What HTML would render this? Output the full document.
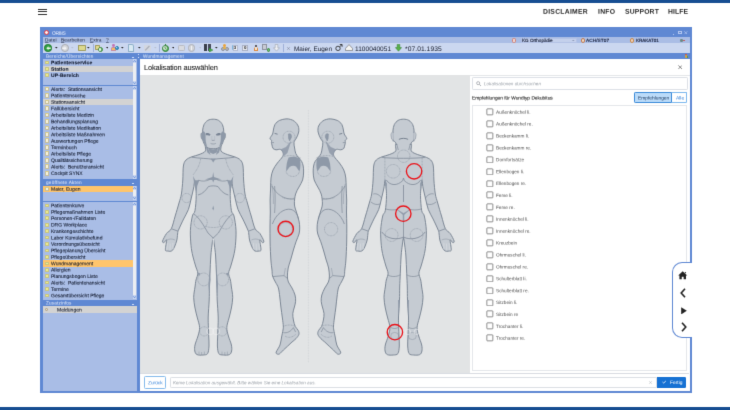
<!DOCTYPE html>
<html><head><meta charset="utf-8"><title>ORBIS</title><style>
*{box-sizing:border-box;margin:0;padding:0}
html,body{width:730px;height:410px;overflow:hidden;background:#fff}
body{position:relative;font-family:"Liberation Sans",sans-serif;color:#111}
.a{position:absolute}
.t{position:absolute;white-space:nowrap;line-height:1}
.t.w{-webkit-text-stroke:0.12px currentColor}
.li{position:absolute;left:43px;width:90px;height:6.45px}
.li .ic{position:absolute;left:1.7px;top:1.4px;width:4.1px;height:3.6px;border-radius:0.6px}
.li .tx{position:absolute;left:8.2px;top:0.5px;font-size:5px;line-height:5.6px;white-space:nowrap;color:#10182c}
.li.b .tx{font-weight:bold;letter-spacing:0.1px}
.yl{background:#edeb92;border:0.3px solid #c9c57e}
.doc{background:#f6f2dc;border:0.3px solid #c6bf9a;border-top:0.9px solid #d9cc84;height:4.8px !important;top:0.8px !important}
.cb{position:absolute;left:486.3px;width:6.6px;height:6.6px;border:0.42px solid #6a6a6a;border-radius:0.9px;background:#fff}
.cl{position:absolute;left:495.5px;font-size:4.7px;line-height:6px;color:#333;white-space:nowrap}
.sb{position:absolute;left:133px;width:3.4px;background:#eef1f8}
</style></head><body>
<svg width="0" height="0" style="position:absolute"><filter id="bl" x="0" y="0" width="100%" height="100%" color-interpolation-filters="sRGB"><feConvolveMatrix order="3" kernelMatrix="0 1 0 1 7 1 0 1 0" edgeMode="duplicate" preserveAlpha="true"/></filter></svg>
<div id="w" style="position:absolute;left:0;top:0;width:730px;height:410px;background:#fff;overflow:hidden;filter:url(#bl)">
<div class="a" style="left:0;top:0;width:730px;height:2.5px;background:#174e92"></div>
<div class="a" style="left:0;top:406.8px;width:730px;height:3.2px;background:#174e92"></div>
<div class="a" style="left:38px;top:9.0px;width:9px;height:1px;background:#333"></div>
<div class="a" style="left:38px;top:11.4px;width:9px;height:1px;background:#333"></div>
<div class="a" style="left:38px;top:13.8px;width:9px;height:1px;background:#333"></div>
<div class="t" style="left:542.8px;top:8px;font-size:6.8px;color:#2a2a2a;transform:translateY(0.70px) rotate(0.03deg);letter-spacing:0.27px;font-weight:bold;">DISCLAIMER</div>
<div class="t" style="left:597.5px;top:8px;font-size:6.8px;color:#2a2a2a;transform:translateY(0.70px) rotate(0.03deg);letter-spacing:0.27px;font-weight:bold;">INFO</div>
<div class="t" style="left:624.9px;top:8px;font-size:6.8px;color:#2a2a2a;transform:translateY(0.70px) rotate(0.03deg);letter-spacing:0.16px;font-weight:bold;">SUPPORT</div>
<div class="t" style="left:668.1px;top:8px;font-size:6.8px;color:#2a2a2a;transform:translateY(0.70px) rotate(0.03deg);letter-spacing:0.1px;font-weight:bold;">HILFE</div>
<div class="a" style="left:40.4px;top:26.5px;width:651.6px;height:366.5px;background:#5f88d3"></div>
<div class="a" style="left:44.1px;top:30.1px;width:5px;height:5px;border-radius:50%;border:1.2px solid #e23a42;background:#fdeeee"></div>
<div class="t" style="left:52.2px;top:31px;font-size:4.8px;color:#eef3ff;transform:translateY(0.70px) rotate(0.03deg);letter-spacing:-0.3px;">ORBIS</div>
<div class="a" style="left:672.5px;top:33.6px;width:1.6px;height:0.8px;background:#b4c8f0"></div>
<div class="a" style="left:678.4px;top:30.7px;width:3.6px;height:3.4px;border:0.7px solid #b4c8f0;border-top-width:1.2px"></div>
<svg class="a" style="left:684.3px;top:30.8px" width="3.6" height="3.6" viewBox="0 0 4 4"><path d="M0.3 0.3L3.7 3.7M3.7 0.3L0.3 3.7" stroke="#b4c8f0" stroke-width="0.8"/></svg>
<div class="a" style="left:42.6px;top:37px;width:647.1px;height:6.4px;background:#aabde5"></div>
<div class="t" style="left:45.3px;top:38px;font-size:4.8px;color:#1a2238;transform:translateY(0.60px) rotate(0.03deg);letter-spacing:0.08px;"><u>D</u>atei</div>
<div class="t" style="left:61.3px;top:38px;font-size:4.8px;color:#1a2238;transform:translateY(0.60px) rotate(0.03deg);letter-spacing:0.08px;"><u>B</u>earbeiten</div>
<div class="t" style="left:90.1px;top:38px;font-size:4.8px;color:#1a2238;transform:translateY(0.60px) rotate(0.03deg);letter-spacing:0.08px;"><u>E</u>xtra</div>
<div class="t" style="left:105.7px;top:38px;font-size:4.8px;color:#1a2238;transform:translateY(0.60px) rotate(0.03deg);letter-spacing:0.08px;"><u>?</u></div>
<div class="a" style="left:42.6px;top:43.4px;width:647.1px;height:9.2px;background:#cbd7f0"></div>
<div class="a" style="left:512px;top:37.8px;width:4.4px;height:5px;border-radius:1.6px;background:#f0d6d0;border:1px solid #cf8078"></div>
<div class="a" style="left:520.6px;top:37.6px;width:56.4px;height:5.4px;background:#c4d0ec;border:0.4px solid #b3c2e6"></div>
<div class="t" style="left:522px;top:39px;font-size:4.6px;color:#0e1630;transform:translateY(0.01px) rotate(0.03deg);-webkit-text-stroke:0.12px #0e1630;">KG Orthopädie</div>
<svg class="a" style="left:572.3px;top:39.6px" width="2.6" height="1.8" viewBox="0 0 4 3"><path d="M0 0H4L2 3Z" fill="#8e9ab8"/></svg>
<div class="a" style="left:581px;top:38px;width:4px;height:4.6px;border-radius:2px;border:0.8px solid #c07a55;background:#f1ddc4"></div>
<div class="t" style="left:586.1px;top:39px;font-size:4.7px;color:#0e1630;transform:translateY(0.01px) rotate(0.03deg);letter-spacing:0.1px;-webkit-text-stroke:0.12px #0e1630;">ACH/ST07</div>
<div class="a" style="left:630px;top:38px;width:4.4px;height:4.6px;border-radius:2px;border:0.8px solid #c98a4a;background:#efd2c0"></div>
<div class="t" style="left:636px;top:38px;font-size:4.5px;color:#0e1630;transform:translateY(0.90px) rotate(0.03deg);-webkit-text-stroke:0.12px #0e1630;">KRAKAT01</div>
<div class="a" style="left:680px;top:39px;width:3px;height:2.6px;border-radius:1.3px;background:#6b8a86"></div><div class="a" style="left:682.6px;top:39.8px;width:2px;height:1.4px;background:#c0504d;border-radius:0.7px"></div>
<div class="a" style="left:44.4px;top:44.3px;width:7.4px;height:7.4px;border-radius:50%;background:#33a043;border:0.7px solid #1f7a2d;"></div>
<svg class="a" style="left:45.5px;top:45.8px" width="5" height="4.4" viewBox="0 0 10 9"><path d="M0.5 4.5L5 0.5V3H9.5V6H5V8.5Z" fill="#e8f5e6"/></svg>
<svg class="a" style="left:55.0px;top:47.4px" width="2.6" height="1.6" viewBox="0 0 4 2.4"><path d="M0 0H4L2 2.4Z" fill="#222"/></svg>
<div class="a" style="left:60.9px;top:44.1px;width:7.8px;height:7.8px;border-radius:50%;background:#d4d6da;border:0.7px solid #a9acb3;"></div>
<svg class="a" style="left:62.4px;top:45.8px" width="5" height="4.4" viewBox="0 0 10 9"><path d="M9.5 4.5L5 0.5V3H0.5V6H5V8.5Z" fill="#f4f4f6"/></svg>
<svg class="a" style="left:71.0px;top:47.4px" width="2.6" height="1.6" viewBox="0 0 4 2.4"><path d="M0 0H4L2 2.4Z" fill="#b9c0d0"/></svg>
<div class="a" style="left:78.2px;top:45.4px;width:7.4px;height:5.4px;background:#dcd98f;border:0.6px solid #a19d60;border-radius:0.8px"></div><div class="a" style="left:78.2px;top:44.6px;width:3.4px;height:1.4px;background:#cfcb80;border:0.5px solid #a19d60;border-bottom:none"></div>
<svg class="a" style="left:87.4px;top:47.4px" width="2.6" height="1.6" viewBox="0 0 4 2.4"><path d="M0 0H4L2 2.4Z" fill="#222"/></svg>
<div class="a" style="left:92.6px;top:44.2px;width:0.6px;height:7.6px;background:#9fb0d8"></div>
<div class="a" style="left:94.6px;top:44.6px;width:5px;height:5px;background:#e0d890;border:0.6px solid #a39c5c;border-radius:0.8px"></div>
<div class="a" style="left:97.6px;top:46.8px;width:5.4px;height:5.4px;border-radius:50%;background:#6ab36a;border:0.6px solid #3c8a42;"></div>
<div class="a" style="left:99.2px;top:48.4px;width:2.2px;height:2.2px;border-radius:50%;background:#e8f3e6;"></div>
<svg class="a" style="left:105.5px;top:47.4px" width="2.6" height="1.6" viewBox="0 0 4 2.4"><path d="M0 0H4L2 2.4Z" fill="#222"/></svg>
<div class="a" style="left:112.39999999999999px;top:44.0px;width:2.8px;height:2.8px;border-radius:50%;background:#c276b4;"></div>
<div class="a" style="left:111.4px;top:46.6px;width:4.6px;height:4.6px;border-radius:1.6px 1.6px 0.6px 0.6px;background:#f3c062;border:0.4px solid #c98aa0"></div>
<div class="a" style="left:115.10000000000001px;top:46.3px;width:4.2px;height:4.2px;border-radius:50%;background:#3f9fce;border:0.4px solid #2f7fae;"></div>
<div class="a" style="left:116.1px;top:47.099999999999994px;width:1.4px;height:1.4px;border-radius:50%;background:#d8eef8;"></div>
<svg class="a" style="left:121.3px;top:47.4px" width="2.6" height="1.6" viewBox="0 0 4 2.4"><path d="M0 0H4L2 2.4Z" fill="#222"/></svg>
<div class="a" style="left:128.2px;top:44.3px;width:6px;height:7.4px;background:#d9eaf3;border:0.6px solid #8fb0c9;border-radius:0.6px 2.2px 0.6px 0.6px"></div>
<svg class="a" style="left:138.0px;top:47.4px" width="2.6" height="1.6" viewBox="0 0 4 2.4"><path d="M0 0H4L2 2.4Z" fill="#222"/></svg>
<div class="a" style="left:144.4px;top:44.8px;width:6.8px;height:6.4px;background:#d3d7e0;border-radius:1px"></div>
<svg class="a" style="left:144.4px;top:44.8px" width="6.8" height="6.4" viewBox="0 0 7 6.4"><path d="M1.2 5.4L5.6 1" stroke="#a9adb8" stroke-width="1.3"/></svg>
<svg class="a" style="left:154.0px;top:47.4px" width="2.6" height="1.6" viewBox="0 0 4 2.4"><path d="M0 0H4L2 2.4Z" fill="#b9c0d0"/></svg>
<div class="a" style="left:159.2px;top:44.2px;width:0.6px;height:7.6px;background:#9fb0d8"></div>
<div class="a" style="left:161.70000000000002px;top:44.699999999999996px;width:7.2px;height:7.2px;border-radius:50%;background:#62b567;border:0.7px solid #2f7d36;"></div>
<div class="a" style="left:163.10000000000002px;top:46.099999999999994px;width:4.4px;height:4.4px;border-radius:50%;background:#cfe8d0;"></div>
<svg class="a" style="left:163.3px;top:46.3px" width="4" height="4" viewBox="0 0 4 4"><path d="M2 0.6V2.1L3.1 2.8" fill="none" stroke="#2c5a30" stroke-width="0.6"/></svg>
<div class="a" style="left:164.5px;top:44px;width:1.6px;height:1.2px;background:#2f7d36"></div>
<svg class="a" style="left:171.89999999999998px;top:47.4px" width="2.6" height="1.6" viewBox="0 0 4 2.4"><path d="M0 0H4L2 2.4Z" fill="#222"/></svg>
<div class="a" style="left:177.6px;top:45px;width:7.6px;height:6.2px;background:#d9dbe0;border:0.6px solid #b9bcc4;border-radius:1.4px"></div>
<div class="a" style="left:187.79999999999998px;top:44.2px;width:7.6px;height:7.6px;border-radius:50%;background:#d2d4d9;border:0.7px solid #adb0b8;"></div>
<div class="a" style="left:191.1px;top:46.2px;width:1px;height:3.6px;background:#f2f2f4"></div>
<svg class="a" style="left:198.6px;top:47.4px" width="2.6" height="1.6" viewBox="0 0 4 2.4"><path d="M0 0H4L2 2.4Z" fill="#b9c0d0"/></svg>
<div class="a" style="left:204.3px;top:44.2px;width:3.1px;height:6.7px;background:#3a3f4c"></div><div class="a" style="left:207.6px;top:44.2px;width:3.1px;height:6.7px;background:#454b5a"></div>
<svg class="a" style="left:208.6px;top:47.6px" width="4" height="4.2" viewBox="0 0 4 4.2"><path d="M0 0L4 2.1L0 4.2Z" fill="#46a84a" stroke="#2a7a30" stroke-width="0.4"/></svg>
<svg class="a" style="left:215.0px;top:47.4px" width="2.6" height="1.6" viewBox="0 0 4 2.4"><path d="M0 0H4L2 2.4Z" fill="#222"/></svg>
<div class="a" style="left:223.0px;top:44.1px;width:3.0px;height:3.0px;border-radius:50%;background:#eba23a;"></div>
<div class="a" style="left:220.6px;top:47.2px;width:4px;height:4px;border-radius:50%;background:#b5b9c2;border:0.4px solid #8b8f99;"></div>
<div class="a" style="left:224.6px;top:47.2px;width:4px;height:4px;border-radius:50%;background:#b5b9c2;border:0.4px solid #8b8f99;"></div>
<div class="a" style="left:222.8px;top:46.8px;width:3.4px;height:2.2px;background:#e4b24c;border-radius:1px"></div>
<div class="a" style="left:231.6px;top:45.2px;width:2px;height:5px;border-radius:1px;background:#7fb6dc"></div>
<div class="a" style="left:232.6px;top:45.4px;width:5px;height:5.4px;background:#eef0f6;border:0.5px solid #b3bbd0"></div><div class="t" style="left:233.8px;top:46.1px;font-size:4.4px;font-weight:bold;color:#222">3</div>
<div class="a" style="left:242.4px;top:45.2px;width:5.4px;height:5.6px;background:#e6e8ee;border:0.5px solid #a9b0c4"></div><div class="t" style="left:243.9px;top:46.1px;font-size:4.4px;font-weight:bold;color:#222">0</div>
<div class="a" style="left:254.7px;top:44.5px;width:2.6px;height:2.6px;border-radius:50%;background:#3a3030;"></div>
<div class="a" style="left:253.8px;top:46.8px;width:4.4px;height:4.4px;border-radius:2px 2px 0.6px 0.6px;background:#e0873a"></div><div class="a" style="left:255.2px;top:47.2px;width:1.6px;height:2.6px;background:#f3e4d0"></div>
<div class="a" style="left:262.4px;top:44.2px;width:4.6px;height:6px;background:#c9ccd4;border:0.5px solid #8e939f"></div>
<div class="a" style="left:266.5px;top:48.1px;width:3.8px;height:3.8px;border-radius:50%;background:#6dbb6f;border:0.4px solid #378a3c;"></div>
<svg class="a" style="left:273.4px;top:44.2px" width="7" height="7.6" viewBox="0 0 7 7.6"><path d="M2.2 0.5H4.8V3.8H6.5L3.5 7.1L0.5 3.8H2.2Z" fill="#eceef2" stroke="#9da2ad" stroke-width="0.6"/></svg>
<div class="a" style="left:283.4px;top:44.2px;width:0.6px;height:7.6px;background:#9fb0d8"></div>
<svg class="a" style="left:286.9px;top:46.6px" width="3" height="3" viewBox="0 0 4 4"><path d="M0.4 0.4L3.6 3.6M3.6 0.4L0.4 3.6" stroke="#7a8196" stroke-width="0.9"/></svg>
<div class="t" style="left:294.4px;top:45px;font-size:6.4px;color:#161c2c;transform:translateY(0.91px) rotate(0.03deg);letter-spacing:0.03px;">Maier, Eugen</div>
<svg class="a" style="left:335px;top:44.4px" width="8" height="7.4" viewBox="0 0 8 7.4"><circle cx="3" cy="4.4" r="2.2" fill="none" stroke="#222" stroke-width="0.8"/><path d="M4.6 2.8L7 0.6M4.8 0.5H7.1V2.8" fill="none" stroke="#222" stroke-width="0.8"/></svg>
<svg class="a" style="left:344.6px;top:44.4px" width="8" height="7" viewBox="0 0 8 7"><path d="M0.5 4.4L4 0.6L7.5 4.4V6.5H0.5Z" fill="#f4f4f2" stroke="#666" stroke-width="0.6"/></svg>
<div class="t" style="left:354.7px;top:45px;font-size:6.5px;color:#161c2c;transform:translateY(0.91px) rotate(0.03deg);letter-spacing:0.04px;">1100040051</div>
<svg class="a" style="left:394.6px;top:44px" width="7" height="7.6" viewBox="0 0 7 7.6"><path d="M2.2 0.4H4.8V3.6H6.6L3.5 7.2L0.4 3.6H2.2Z" fill="#58b04a" stroke="#2f7d2c" stroke-width="0.5"/></svg>
<div class="t" style="left:405.3px;top:45px;font-size:6.7px;color:#161c2c;transform:translateY(0.92px) rotate(0.03deg);letter-spacing:0.06px;">*07.01.1935</div>
<div class="t" style="left:45.9px;top:54px;font-size:4.7px;color:#e4ecfb;transform:translateY(0.71px) rotate(0.03deg);letter-spacing:0.14px;">Bereiche/Übersichten</div>
<div class="a" style="left:132.4px;top:56.6px;width:1.4px;height:0.7px;background:#cfdcf8"></div>
<div class="a" style="left:138.2px;top:54.2px;width:0.9px;height:4px;border-top:1px solid #d6e1f8;border-bottom:1px solid #d6e1f8;"></div>
<div class="t" style="left:143px;top:54px;font-size:4.7px;color:#e4ecfb;transform:translateY(0.71px) rotate(0.03deg);letter-spacing:0.1px;">Wundmanagement</div>
<div class="a" style="left:685.4px;top:53.5px;width:1.8px;height:1.8px;border-radius:50%;background:#d9503a;"></div>
<div class="a" style="left:685.3px;top:55.4px;width:2.2px;height:2.6px;background:#d8a23a;border-radius:0.8px"></div>
<div class="a" style="left:686.8000000000001px;top:56.400000000000006px;width:1.6px;height:1.6px;border-radius:50%;background:#4d9a3a;"></div>
<div class="a" style="left:42.8px;top:59px;width:94.4px;height:331.6px;background:#a9bde6"></div>
<div class="li b" style="top:59.20px;width:89.8px;"><span class="ic yl"></span></div>
<div class="t" style="left:51.2px;top:60px;font-size:5.0px;color:#0c1326;transform:translateY(0.20px) rotate(0.03deg);letter-spacing:0.1px;font-weight:bold;-webkit-text-stroke:0.06px #0c1326;">Patientenservice</div>
<div class="li b" style="top:65.70px;width:89.8px;background:#d3d3d3;"><span class="ic yl"></span></div>
<div class="t" style="left:51.2px;top:66px;font-size:5.0px;color:#0c1326;transform:translateY(0.70px) rotate(0.03deg);letter-spacing:0.1px;font-weight:bold;-webkit-text-stroke:0.06px #0c1326;">Station</div>
<div class="li b" style="top:72.10px;width:89.8px;"><span class="ic yl"></span></div>
<div class="t" style="left:51.2px;top:73px;font-size:5.0px;color:#0c1326;transform:translateY(0.10px) rotate(0.03deg);letter-spacing:0.1px;font-weight:bold;-webkit-text-stroke:0.06px #0c1326;">UP-Bereich</div>
<div class="a" style="left:42.8px;top:84.9px;width:94.4px;height:0.9px;background:#5f88d3"></div>
<div class="li " style="top:85.90px;width:89.8px;"><span class="ic doc"></span></div>
<div class="t" style="left:51.2px;top:86px;font-size:5.0px;color:#0c1326;transform:translateY(0.90px) rotate(0.03deg);-webkit-text-stroke:0.06px #0c1326;">Alerts:&nbsp; Stationsansicht</div>
<div class="li " style="top:92.37px;width:89.8px;"><span class="ic doc"></span></div>
<div class="t" style="left:51.2px;top:93px;font-size:5.0px;color:#0c1326;transform:translateY(0.37px) rotate(0.03deg);-webkit-text-stroke:0.06px #0c1326;">Patientensuche</div>
<div class="li " style="top:98.84px;width:89.8px;background:#d3d3d3;"><span class="ic doc"></span></div>
<div class="t" style="left:51.2px;top:99px;font-size:5.0px;color:#0c1326;transform:translateY(0.84px) rotate(0.03deg);-webkit-text-stroke:0.06px #0c1326;">Stationsansicht</div>
<div class="li " style="top:105.31px;width:89.8px;"><span class="ic doc"></span></div>
<div class="t" style="left:51.2px;top:106px;font-size:5.0px;color:#0c1326;transform:translateY(0.31px) rotate(0.03deg);-webkit-text-stroke:0.06px #0c1326;">Fallübersicht</div>
<div class="li " style="top:111.78px;width:89.8px;"><span class="ic doc"></span></div>
<div class="t" style="left:51.2px;top:112px;font-size:5.0px;color:#0c1326;transform:translateY(0.78px) rotate(0.03deg);-webkit-text-stroke:0.06px #0c1326;">Arbeitsliste Medizin</div>
<div class="li " style="top:118.25px;width:89.8px;"><span class="ic doc"></span></div>
<div class="t" style="left:51.2px;top:119px;font-size:5.0px;color:#0c1326;transform:translateY(0.25px) rotate(0.03deg);-webkit-text-stroke:0.06px #0c1326;">Behandlungsplanung</div>
<div class="li " style="top:124.72px;width:89.8px;"><span class="ic doc"></span></div>
<div class="t" style="left:51.2px;top:125px;font-size:5.0px;color:#0c1326;transform:translateY(0.72px) rotate(0.03deg);-webkit-text-stroke:0.06px #0c1326;">Arbeitsliste Medikation</div>
<div class="li " style="top:131.19px;width:89.8px;"><span class="ic doc"></span></div>
<div class="t" style="left:51.2px;top:132px;font-size:5.0px;color:#0c1326;transform:translateY(0.19px) rotate(0.03deg);-webkit-text-stroke:0.06px #0c1326;">Arbeitsliste Maßnahmen</div>
<div class="li " style="top:137.66px;width:89.8px;"><span class="ic doc"></span></div>
<div class="t" style="left:51.2px;top:138px;font-size:5.0px;color:#0c1326;transform:translateY(0.66px) rotate(0.03deg);-webkit-text-stroke:0.06px #0c1326;">Auswertungen Pflege</div>
<div class="li " style="top:144.13px;width:89.8px;"><span class="ic doc"></span></div>
<div class="t" style="left:51.2px;top:145px;font-size:5.0px;color:#0c1326;transform:translateY(0.13px) rotate(0.03deg);-webkit-text-stroke:0.06px #0c1326;">Terminbuch</div>
<div class="li " style="top:150.60px;width:89.8px;"><span class="ic doc"></span></div>
<div class="t" style="left:51.2px;top:151px;font-size:5.0px;color:#0c1326;transform:translateY(0.60px) rotate(0.03deg);-webkit-text-stroke:0.06px #0c1326;">Arbeitsliste Pflege</div>
<div class="li " style="top:157.07px;width:89.8px;"><span class="ic doc"></span></div>
<div class="t" style="left:51.2px;top:158px;font-size:5.0px;color:#0c1326;transform:translateY(0.07px) rotate(0.03deg);-webkit-text-stroke:0.06px #0c1326;">Qualitätssicherung</div>
<div class="li " style="top:163.54px;width:89.8px;"><span class="ic doc"></span></div>
<div class="t" style="left:51.2px;top:164px;font-size:5.0px;color:#0c1326;transform:translateY(0.54px) rotate(0.03deg);-webkit-text-stroke:0.06px #0c1326;">Alerts:&nbsp; Benutzeransicht</div>
<div class="li " style="top:170.01px;width:89.8px;"><span class="ic doc"></span></div>
<div class="t" style="left:51.2px;top:171px;font-size:5.0px;color:#0c1326;transform:translateY(0.01px) rotate(0.03deg);-webkit-text-stroke:0.06px #0c1326;">Cockpit SYNX</div>
<div class="a" style="left:42.8px;top:179.4px;width:94.4px;height:6.3px;background:#5f88d3"></div>
<div class="t" style="left:45.9px;top:181px;font-size:4.7px;color:#e4ecfb;transform:translateY(0.01px) rotate(0.03deg);letter-spacing:0.22px;">geöffnete Akten</div>
<div class="a" style="left:132.4px;top:183.2px;width:1.4px;height:0.7px;background:#cfdcf8"></div>
<div class="li " style="top:185.80px;width:89.8px;background:#ffc56c;"><span class="ic doc"></span></div>
<div class="t" style="left:51.2px;top:186px;font-size:5.0px;color:#0c1326;transform:translateY(0.80px) rotate(0.03deg);-webkit-text-stroke:0.06px #0c1326;">Maier, Eugen</div>
<div class="a" style="left:42.8px;top:200.6px;width:94.4px;height:0.9px;background:#5f88d3"></div>
<div class="li " style="top:202.20px;width:89.8px;"><span class="ic yl"></span></div>
<div class="t" style="left:51.2px;top:203px;font-size:5.0px;color:#0c1326;transform:translateY(0.20px) rotate(0.03deg);-webkit-text-stroke:0.06px #0c1326;">Patientenkurve</div>
<div class="li " style="top:208.64px;width:89.8px;"><span class="ic yl"></span></div>
<div class="t" style="left:51.2px;top:209px;font-size:5.0px;color:#0c1326;transform:translateY(0.64px) rotate(0.03deg);-webkit-text-stroke:0.06px #0c1326;">Pflegemaßnahmen Liste</div>
<div class="li " style="top:215.08px;width:89.8px;"><span class="ic yl"></span></div>
<div class="t" style="left:51.2px;top:216px;font-size:5.0px;color:#0c1326;transform:translateY(0.08px) rotate(0.03deg);-webkit-text-stroke:0.06px #0c1326;">Personen-/Falldaten</div>
<div class="li " style="top:221.52px;width:89.8px;"><span class="ic yl"></span></div>
<div class="t" style="left:51.2px;top:222px;font-size:5.0px;color:#0c1326;transform:translateY(0.52px) rotate(0.03deg);-webkit-text-stroke:0.06px #0c1326;">DRG Workplace</div>
<div class="li " style="top:227.96px;width:89.8px;"><span class="ic yl"></span></div>
<div class="t" style="left:51.2px;top:228px;font-size:5.0px;color:#0c1326;transform:translateY(0.96px) rotate(0.03deg);-webkit-text-stroke:0.06px #0c1326;">Krankengeschichte</div>
<div class="li " style="top:234.40px;width:89.8px;"><span class="ic yl"></span></div>
<div class="t" style="left:51.2px;top:235px;font-size:5.0px;color:#0c1326;transform:translateY(0.40px) rotate(0.03deg);-webkit-text-stroke:0.06px #0c1326;">Labor Kumulativbefund</div>
<div class="li " style="top:240.84px;width:89.8px;"><span class="ic yl"></span></div>
<div class="t" style="left:51.2px;top:241px;font-size:5.0px;color:#0c1326;transform:translateY(0.84px) rotate(0.03deg);-webkit-text-stroke:0.06px #0c1326;">Verordnungsübersicht</div>
<div class="li " style="top:247.28px;width:89.8px;"><span class="ic yl"></span></div>
<div class="t" style="left:51.2px;top:248px;font-size:5.0px;color:#0c1326;transform:translateY(0.28px) rotate(0.03deg);-webkit-text-stroke:0.06px #0c1326;">Pflegeplanung Übersicht</div>
<div class="li " style="top:253.72px;width:89.8px;"><span class="ic yl"></span></div>
<div class="t" style="left:51.2px;top:254px;font-size:5.0px;color:#0c1326;transform:translateY(0.72px) rotate(0.03deg);-webkit-text-stroke:0.06px #0c1326;">Pflegeübersicht</div>
<div class="li " style="top:260.16px;width:89.8px;background:#ffc56c;"><span class="ic yl"></span></div>
<div class="t" style="left:51.2px;top:261px;font-size:5.0px;color:#0c1326;transform:translateY(0.16px) rotate(0.03deg);-webkit-text-stroke:0.06px #0c1326;">Wundmanagement</div>
<div class="li " style="top:266.60px;width:89.8px;"><span class="ic yl"></span></div>
<div class="t" style="left:51.2px;top:267px;font-size:5.0px;color:#0c1326;transform:translateY(0.60px) rotate(0.03deg);-webkit-text-stroke:0.06px #0c1326;">Allergien</div>
<div class="li " style="top:273.04px;width:89.8px;"><span class="ic yl"></span></div>
<div class="t" style="left:51.2px;top:274px;font-size:5.0px;color:#0c1326;transform:translateY(0.04px) rotate(0.03deg);-webkit-text-stroke:0.06px #0c1326;">Planungsbogen Liste</div>
<div class="li " style="top:279.48px;width:89.8px;"><span class="ic yl"></span></div>
<div class="t" style="left:51.2px;top:280px;font-size:5.0px;color:#0c1326;transform:translateY(0.48px) rotate(0.03deg);-webkit-text-stroke:0.06px #0c1326;">Alerts:&nbsp; Patientenansicht</div>
<div class="li " style="top:285.92px;width:89.8px;"><span class="ic yl"></span></div>
<div class="t" style="left:51.2px;top:286px;font-size:5.0px;color:#0c1326;transform:translateY(0.92px) rotate(0.03deg);-webkit-text-stroke:0.06px #0c1326;">Termine</div>
<div class="li " style="top:292.36px;width:89.8px;"><span class="ic yl"></span></div>
<div class="t" style="left:51.2px;top:293px;font-size:5.0px;color:#0c1326;transform:translateY(0.36px) rotate(0.03deg);-webkit-text-stroke:0.06px #0c1326;">Gesamtübersicht Pflege</div>
<div class="a" style="left:42.8px;top:299.6px;width:94.4px;height:6.5px;background:#5f88d3"></div>
<div class="t" style="left:45.9px;top:301px;font-size:4.7px;color:#e4ecfb;transform:translateY(0.51px) rotate(0.03deg);letter-spacing:0.15px;">Zusatzinfos</div>
<div class="a" style="left:132.4px;top:303.6px;width:1.4px;height:0.7px;background:#cfdcf8"></div>
<div class="a" style="left:42.8px;top:306.4px;width:94.4px;height:6.6px;background:#d3d3d3"></div>
<div class="a" style="left:45.1px;top:308.3px;width:3.0px;height:3.0px;border-radius:50%;background:#e9e4d8;border:0.4px solid #a89a7a;"></div>
<div class="t" style="left:57.3px;top:307px;font-size:5.0px;color:#0c1326;transform:translateY(0.50px) rotate(0.03deg);-webkit-text-stroke:0.06px #0c1326;">Meldungen</div>
<div class="sb" style="top:59.2px;height:25.599999999999994px;background:#c9d6f0"></div>
<div class="sb" style="top:63.400000000000006px;height:17.199999999999996px;background:#eceef2"></div>
<svg class="a" style="left:133.2px;top:60.400000000000006px" width="3.2" height="2.2" viewBox="0 0 4 3"><path d="M0.3 2.6L2 0.6L3.7 2.6" fill="none" stroke="#3f6fcc" stroke-width="0.9"/></svg>
<svg class="a" style="left:133.2px;top:81.6px" width="3.2" height="2.2" viewBox="0 0 4 3"><path d="M0.3 0.4L2 2.4L3.7 0.4" fill="none" stroke="#3f6fcc" stroke-width="0.9"/></svg>
<div class="sb" style="top:86px;height:93.19999999999999px;background:#c9d6f0"></div>
<div class="sb" style="top:90.2px;height:84.79999999999998px;background:#eceef2"></div>
<svg class="a" style="left:133.2px;top:87.2px" width="3.2" height="2.2" viewBox="0 0 4 3"><path d="M0.3 2.6L2 0.6L3.7 2.6" fill="none" stroke="#3f6fcc" stroke-width="0.9"/></svg>
<svg class="a" style="left:133.2px;top:176.0px" width="3.2" height="2.2" viewBox="0 0 4 3"><path d="M0.3 0.4L2 2.4L3.7 0.4" fill="none" stroke="#3f6fcc" stroke-width="0.9"/></svg>
<div class="sb" style="top:185.9px;height:14.5px;background:#c9d6f0"></div>
<div class="sb" style="top:190.1px;height:6.1px;background:#eceef2"></div>
<svg class="a" style="left:133.2px;top:187.1px" width="3.2" height="2.2" viewBox="0 0 4 3"><path d="M0.3 2.6L2 0.6L3.7 2.6" fill="none" stroke="#3f6fcc" stroke-width="0.9"/></svg>
<svg class="a" style="left:133.2px;top:197.20000000000002px" width="3.2" height="2.2" viewBox="0 0 4 3"><path d="M0.3 0.4L2 2.4L3.7 0.4" fill="none" stroke="#3f6fcc" stroke-width="0.9"/></svg>
<div class="sb" style="top:201.6px;height:97.79999999999998px;background:#c9d6f0"></div>
<div class="sb" style="top:205.79999999999998px;height:89.39999999999998px;background:#eceef2"></div>
<svg class="a" style="left:133.2px;top:202.79999999999998px" width="3.2" height="2.2" viewBox="0 0 4 3"><path d="M0.3 2.6L2 0.6L3.7 2.6" fill="none" stroke="#3f6fcc" stroke-width="0.9"/></svg>
<svg class="a" style="left:133.2px;top:296.2px" width="3.2" height="2.2" viewBox="0 0 4 3"><path d="M0.3 0.4L2 2.4L3.7 0.4" fill="none" stroke="#3f6fcc" stroke-width="0.9"/></svg>
<div class="a" style="left:140px;top:59px;width:549.7px;height:332.2px;background:#fff"></div>
<div class="t" style="left:144.1px;top:64px;font-size:7.4px;color:#1c1c1c;transform:translateY(0.10px) rotate(0.03deg);letter-spacing:-0.12px;-webkit-text-stroke:0.08px #1c1c1c;">Lokalisation auswählen</div>
<svg class="a" style="left:677.8px;top:65.2px" width="4.4" height="4.4" viewBox="0 0 5 5"><path d="M0.4 0.4L4.6 4.6M4.6 0.4L0.4 4.6" stroke="#444" stroke-width="0.7"/></svg>
<div class="a" style="left:140px;top:75.2px;width:330px;height:298px;background:#e2e4e5"></div>
<div class="a" style="left:470px;top:74.8px;width:219.6px;height:0.6px;background:#e4e6e9"></div>
<svg class="a" style="left:0;top:0" width="730" height="410" viewBox="0 0 730 410">
<g fill="#c5cbd2" stroke="#7c8795" stroke-width="1.0" stroke-linejoin="round">
<path d="M206.2 143.0C203.7 144.3 206.6 149.1 205.4 151.0C204.2 152.9 201.3 153.6 199.0 154.6C196.7 155.6 194.0 155.9 191.8 156.8C189.6 157.7 187.4 158.5 186.0 160.0C184.6 161.5 183.9 162.7 183.4 166.0C182.9 169.3 183.1 175.3 182.8 180.0C182.5 184.7 182.0 190.2 181.4 194.0C180.8 197.8 180.0 199.3 179.0 203.0C178.0 206.7 176.5 211.7 175.2 216.0C173.9 220.3 172.8 225.8 171.3 228.7C169.9 231.6 167.9 231.4 166.5 233.5C165.1 235.6 163.0 239.5 162.6 241.0C162.2 242.5 163.3 242.8 164.0 242.6C164.7 242.4 166.4 238.8 166.6 240.0C166.8 241.2 165.3 247.8 165.4 249.6C165.5 251.4 166.2 250.9 167.4 251.0C168.6 251.1 171.1 251.9 172.6 250.2C174.1 248.5 175.8 243.7 176.6 241.0C177.4 238.3 177.3 235.8 177.6 234.0C177.9 232.2 177.4 232.8 178.4 230.3C179.4 227.8 181.9 222.5 183.6 219.0C185.3 215.5 187.1 212.9 188.4 209.5C189.7 206.1 190.3 202.0 191.2 198.4C192.1 194.8 193.0 191.0 193.6 188.0C194.2 185.0 194.5 179.3 194.9 180.5C195.3 181.7 196.2 190.4 196.2 195.4C196.2 200.4 195.6 207.2 195.0 210.6C194.4 214.0 193.2 212.7 192.4 216.0C191.6 219.3 190.6 225.4 190.4 230.3C190.2 235.2 190.6 241.1 191.0 245.4C191.4 249.7 192.0 252.6 192.8 256.0C193.6 259.4 194.8 263.1 195.6 266.0C196.4 268.9 197.7 270.9 197.8 273.2C197.9 275.5 196.5 277.7 196.0 280.0C195.5 282.3 195.4 284.1 195.0 287.0C194.6 289.9 193.7 293.9 193.7 297.4C193.7 300.9 194.4 304.6 195.0 308.0C195.6 311.4 196.6 314.8 197.4 318.0C198.2 321.2 199.5 324.5 199.6 327.5C199.7 330.5 198.8 333.1 198.0 336.0C197.2 338.9 195.5 342.5 195.0 345.0C194.5 347.5 194.5 349.4 194.8 351.0C195.1 352.6 195.6 353.9 197.0 354.6C198.4 355.3 201.2 355.2 203.0 355.0C204.8 354.8 206.6 355.1 207.6 353.6C208.6 352.1 208.8 348.9 209.0 346.0C209.2 343.1 208.8 339.1 208.7 336.0C208.6 332.9 208.5 330.7 208.4 327.5C208.3 324.3 208.1 321.6 208.2 317.0C208.3 312.4 209.0 305.0 209.2 300.0C209.4 295.0 209.3 291.5 209.4 287.0C209.5 282.5 209.8 278.4 210.0 273.2C210.2 268.0 210.5 260.7 210.8 256.0C211.1 251.3 211.7 247.9 212.0 245.0C212.3 242.1 212.7 239.7 212.9 238.6C213.2 237.5 213.2 237.5 213.5 238.6C213.7 239.7 214.0 242.1 214.4 245.0C214.7 247.9 215.3 251.3 215.6 256.0C215.9 260.7 216.2 268.0 216.4 273.2C216.6 278.4 216.9 282.5 217.0 287.0C217.1 291.5 217.0 295.0 217.2 300.0C217.4 305.0 218.1 312.4 218.2 317.0C218.3 321.6 218.1 324.3 218.0 327.5C217.9 330.7 217.8 332.9 217.7 336.0C217.6 339.1 217.2 343.1 217.4 346.0C217.6 348.9 217.8 352.1 218.8 353.6C219.8 355.1 221.6 354.8 223.4 355.0C225.2 355.2 228.0 355.3 229.4 354.6C230.8 353.9 231.3 352.6 231.6 351.0C231.9 349.4 231.9 347.5 231.4 345.0C230.9 342.5 229.2 338.9 228.4 336.0C227.6 333.1 226.7 330.5 226.8 327.5C226.9 324.5 228.2 321.2 229.0 318.0C229.8 314.8 230.8 311.4 231.4 308.0C232.0 304.6 232.7 300.9 232.7 297.4C232.7 293.9 231.8 289.9 231.4 287.0C231.0 284.1 230.9 282.3 230.4 280.0C229.9 277.7 228.5 275.5 228.6 273.2C228.7 270.9 230.0 268.9 230.8 266.0C231.6 263.1 232.8 259.4 233.6 256.0C234.4 252.6 235.0 249.7 235.4 245.4C235.8 241.1 236.2 235.2 236.0 230.3C235.8 225.4 234.8 219.3 234.0 216.0C233.2 212.7 232.0 214.0 231.4 210.6C230.8 207.2 230.2 200.4 230.2 195.4C230.2 190.4 231.1 181.7 231.5 180.5C231.9 179.3 232.2 185.0 232.8 188.0C233.4 191.0 234.3 194.8 235.2 198.4C236.1 202.0 236.7 206.1 238.0 209.5C239.3 212.9 241.1 215.5 242.8 219.0C244.5 222.5 247.0 227.8 248.0 230.3C249.0 232.8 248.5 232.2 248.8 234.0C249.1 235.8 249.0 238.3 249.8 241.0C250.6 243.7 252.3 248.5 253.8 250.2C255.3 251.9 257.8 251.1 259.0 251.0C260.2 250.9 260.9 251.4 261.0 249.6C261.1 247.8 259.6 241.2 259.8 240.0C260.0 238.8 261.7 242.4 262.4 242.6C263.1 242.8 264.2 242.5 263.8 241.0C263.4 239.5 261.3 235.6 259.9 233.5C258.4 231.4 256.5 231.6 255.1 228.7C253.6 225.8 252.5 220.3 251.2 216.0C249.9 211.7 248.4 206.7 247.4 203.0C246.4 199.3 245.6 197.8 245.0 194.0C244.4 190.2 243.9 184.7 243.6 180.0C243.3 175.3 243.5 169.3 243.0 166.0C242.5 162.7 241.8 161.5 240.4 160.0C239.0 158.5 236.8 157.7 234.6 156.8C232.4 155.9 229.7 155.6 227.4 154.6C225.1 153.6 222.2 152.9 221.0 151.0C219.8 149.1 222.7 144.3 220.2 143.0C217.7 141.7 208.7 141.7 206.2 143.0Z"/>
<path d="M213.2 119.2C211.4 119.2 209.3 119.5 207.8 120.4C206.3 121.3 204.8 123.0 204.0 124.6C203.2 126.2 202.9 128.6 202.7 130.0C202.5 131.4 202.8 132.4 202.6 133.0C202.3 133.6 201.4 132.8 201.2 133.6C201.0 134.3 201.0 136.4 201.3 137.5C201.6 138.6 202.4 139.3 202.8 140.2C203.2 141.1 203.3 142.0 203.8 143.0C204.3 144.0 204.8 145.1 205.6 146.0C206.4 146.9 207.3 147.7 208.6 148.2C209.9 148.7 211.7 148.8 213.2 148.8C214.7 148.8 216.5 148.7 217.8 148.2C219.1 147.7 220.0 146.9 220.8 146.0C221.6 145.1 222.1 144.0 222.6 143.0C223.1 142.0 223.2 141.1 223.6 140.2C224.0 139.3 224.8 138.6 225.1 137.5C225.4 136.4 225.4 134.3 225.2 133.6C225.0 132.8 224.0 133.6 223.8 133.0C223.5 132.4 223.9 131.4 223.7 130.0C223.5 128.6 223.2 126.2 222.4 124.6C221.5 123.0 220.1 121.3 218.6 120.4C217.1 119.5 215.0 119.2 213.2 119.2Z"/>
<path d="M167.6 243L166.8 250.4M170.2 243.6L170 250.6M172.8 243L173 249.4M258.8 243L259.6 250.4M256.2 243.6L256.4 250.6M253.6 243L253.4 249.4" fill="none" stroke="#dde0e4" stroke-width="0.55"/>
<path d="M166.4 240.4C169 238.6 172 238.6 175 240M260 240.4C257.4 238.6 254.4 238.6 251.4 240" fill="none" stroke-width="0.4"/>
<path d="M205.6 146L207.4 152.6L210.6 155L208 148ZM220.8 146L219 152.6L215.8 155L218.4 148Z" fill="#8e99a8" stroke="none"/>
<path d="M202.8 131C204.6 131.6 205.6 133 205.6 135.6C205.4 139.6 205.8 143 207.2 146.6L204.4 144L202.9 140.4L201.3 137.6L201.2 133.6L202.6 133ZM223.6 131C221.8 131.6 220.8 133 220.8 135.6C221 139.6 220.6 143 219.2 146.6L222 144L223.5 140.4L225.1 137.6L225.2 133.6L223.8 133Z" fill="#8e99a8" stroke="none"/>
<path d="M208.4 148.6L213.2 149.4L218 148.6L216.6 152.6L213.2 154L209.8 152.6Z" fill="#8e99a8" stroke="none"/>
<path d="M191.8 157.2C200 158.6 207 158.2 213.2 159.4C219.4 158.2 226.4 158.6 234.6 157.2" fill="none" stroke-width="0.75"/>
<path d="M210.6 158.6L213.2 162.6L215.8 158.6Z" fill="#8e99a8" stroke="none"/>
<path d="M213.2 172L212.4 177L205 179.6L212.2 180L213.2 182.4L214.2 180L221.4 179.6L214 177Z" fill="#8e99a8" stroke="none"/>
<path d="M193 176L195.4 180.4L199.4 180L197.2 186L196.6 192.4L194.6 186ZM233.4 176L231 180.4L227 180L229.2 186L229.8 192.4L231.8 186Z" fill="#8e99a8" stroke="none"/>
<path d="M198.6 180.2C201.6 181.6 206 181.4 209.6 179.6M227.8 180.2C224.8 181.6 220.4 181.4 216.8 179.6" fill="none" stroke-width="0.65"/>
<path d="M198 195C203 194 206 190 208.4 186.6C211 185.6 215.4 185.6 218 186.6C220.4 190 223.4 194 228.4 195" fill="none" stroke-width="0.75"/>
<path d="M200.6 159C199.6 166 196 171 193 175M225.8 159C226.8 166 230.4 171 233.4 175" fill="none" stroke-width="0.5" stroke-dasharray="0.9 0.6"/>
<path d="M213.2 205.4L212.4 208.4L213.2 210.4L214 208.4Z" fill="#8e99a8" stroke="none"/>
<path d="M193.6 214C199 217 204 226 208 233L213.2 238L218.4 233C222.4 226 227.4 217 232.8 214" fill="none" stroke-width="0.75"/>
<path d="M205 226C209 228 217.4 228 221.4 226" fill="none" stroke-width="0.5" stroke-dasharray="0.9 0.6"/>
<circle cx="200.6" cy="222.4" r="6.6" fill="none" stroke-width="0.5" stroke-dasharray="0.9 0.6"/><circle cx="225.8" cy="222.4" r="6.6" fill="none" stroke-width="0.5" stroke-dasharray="0.9 0.6"/>
<path d="M212.5 238.4L213.2 244.4L213.9 238.4Z" fill="#eef0f2" stroke="none"/>
<path d="M205.8 133.2C207.4 132.6 209.6 133 210.6 134.6L209.6 135.8C208.4 135.4 207 135.6 205.8 135ZM220.6 133.2C219 132.6 216.8 133 215.8 134.6L216.8 135.8C218 135.4 219.4 135.6 220.6 135Z" fill="#7a8595" stroke="none"/>
<path d="M211.8 136V140M214.6 136V140" fill="none" stroke="#a9b0ba" stroke-width="0.4"/>
<path d="M210.6 143.4C212 144.2 214.4 144.2 215.8 143.4M211.8 140.4H214.6" fill="none" stroke="#7c8796" stroke-width="0.6"/>
<circle cx="186.6" cy="198" r="4.6" fill="none" stroke-width="0.5" stroke-dasharray="0.9 0.6"/><circle cx="239.8" cy="198" r="4.6" fill="none" stroke-width="0.5" stroke-dasharray="0.9 0.6"/>
<ellipse cx="203.8" cy="279.4" rx="6" ry="6.4" fill="none" stroke-width="0.5" stroke-dasharray="0.9 0.6"/><ellipse cx="222.6" cy="279.4" rx="6" ry="6.4" fill="none" stroke-width="0.5" stroke-dasharray="0.9 0.6"/>
<path d="M209.6 270L210.4 280L209.4 296L208.4 285ZM216.8 270L216 280L217 296L218 285Z" fill="#8e99a8" stroke="none"/>
<path d="M197.4 272.6L200.6 273.6L198.8 276ZM229 272.6L225.8 273.6L227.6 276Z" fill="#8e99a8" stroke="none"/>
<circle cx="204.2" cy="331.4" r="4.6" fill="none" stroke-width="0.5" stroke-dasharray="0.9 0.6"/><circle cx="222.2" cy="331.4" r="4.6" fill="none" stroke-width="0.5" stroke-dasharray="0.9 0.6"/>
<circle cx="210.2" cy="331.4" r="3.4" fill="none" stroke="#f2f3f4" stroke-width="0.5"/><circle cx="216.2" cy="331.4" r="3.4" fill="none" stroke="#f2f3f4" stroke-width="0.5"/>
<path d="M171.6 228.8L178 231.2M254.8 228.8L248.4 231.2" fill="none" stroke-width="0.75"/>
<path d="M199 351.6V354.6M201.6 352V355M204.4 351.6V354.6M227.4 351.6V354.6M224.8 352V355M222 351.6V354.6" fill="none" stroke-width="0.4"/>
</g>
<g fill="#c5cbd2" stroke="#7c8795" stroke-width="1.0" stroke-linejoin="round">
<path d="M286.0 118.9C284.2 119.1 281.4 119.5 279.6 120.4C277.8 121.3 276.0 122.8 275.0 124.4C274.0 126.0 273.8 128.4 273.4 130.0C273.0 131.6 273.2 132.6 272.6 134.0C272.0 135.4 270.2 137.3 270.0 138.4C269.8 139.5 271.4 139.7 271.6 140.4C271.8 141.1 271.3 141.8 271.4 142.6C271.5 143.4 271.7 144.0 272.0 145.0C272.3 146.0 272.3 147.6 273.0 148.4C273.7 149.2 274.8 149.6 276.0 149.8C277.2 150.0 279.2 148.9 280.4 149.4C281.6 149.9 282.6 151.4 283.0 152.6C283.4 153.8 283.5 154.9 282.6 156.6C281.7 158.3 279.0 160.8 277.4 163.0C275.8 165.2 274.1 167.5 273.0 170.0C271.9 172.5 271.4 175.0 271.0 178.0C270.6 181.0 270.8 184.3 270.6 188.0C270.5 191.7 270.2 196.0 270.1 200.0C270.1 204.0 270.3 207.7 270.3 212.0C270.3 216.3 270.0 221.0 270.0 226.0C270.0 231.0 270.0 236.3 270.1 242.0C270.2 247.7 270.6 255.3 270.9 260.0C271.2 264.7 271.7 267.3 272.0 270.0C272.3 272.7 272.0 274.0 272.6 276.0C273.2 278.0 274.4 280.0 275.4 282.0C276.4 284.0 277.7 285.5 278.4 288.0C279.1 290.5 279.4 293.8 279.8 297.0C280.2 300.2 280.5 303.5 280.9 307.0C281.3 310.5 282.0 314.8 282.4 318.0C282.8 321.2 283.2 324.0 283.3 326.0C283.4 328.0 283.3 328.2 283.0 330.0C282.7 331.8 282.1 334.5 281.6 337.0C281.1 339.5 280.9 342.5 280.0 345.0C279.1 347.5 276.7 350.5 276.2 352.0C275.7 353.5 276.6 353.7 277.2 354.0C277.8 354.3 278.6 354.5 279.6 353.8C280.6 353.1 282.1 351.3 283.4 350.0C284.7 348.7 286.2 347.5 287.6 346.2C289.0 344.9 290.6 343.3 292.0 342.0C293.4 340.7 294.9 339.9 296.0 338.6C297.1 337.3 298.5 335.8 298.9 334.4C299.3 333.0 298.8 331.7 298.2 330.4C297.6 329.1 296.1 328.3 295.3 326.6C294.5 324.9 293.8 322.2 293.4 320.0C293.0 317.8 292.6 315.6 292.8 313.4C293.0 311.2 293.9 309.0 294.4 307.0C294.9 305.0 295.5 303.3 295.6 301.3C295.7 299.3 295.6 297.2 295.0 295.0C294.4 292.8 293.1 290.2 292.0 288.0C290.9 285.8 289.2 284.0 288.4 282.0C287.6 280.0 287.4 278.3 287.4 276.0C287.4 273.7 287.7 270.7 288.2 268.0C288.7 265.3 289.7 263.0 290.6 260.0C291.5 257.0 292.5 253.0 293.4 250.0C294.3 247.0 295.1 244.5 296.0 241.8C296.9 239.1 298.4 236.3 299.0 234.0C299.6 231.7 299.7 230.2 299.7 228.0C299.7 225.8 299.6 223.7 299.0 221.0C298.4 218.3 297.2 214.8 296.4 212.0C295.6 209.2 294.5 207.0 294.4 204.0C294.3 201.0 294.8 196.8 295.6 194.0C296.4 191.2 297.8 189.3 299.0 187.0C300.2 184.7 301.8 182.5 302.6 180.0C303.4 177.5 303.5 174.3 303.6 172.0C303.7 169.7 303.5 167.8 303.2 166.0C302.9 164.2 302.4 162.8 301.6 161.4C300.8 160.0 299.6 158.9 298.6 157.6C297.6 156.3 296.5 155.2 295.8 153.6C295.1 152.0 294.9 149.9 294.6 148.0C294.3 146.1 293.7 144.1 294.0 142.4C294.3 140.7 295.6 139.7 296.4 138.0C297.2 136.3 298.4 134.0 298.7 132.0C299.0 130.0 298.9 127.8 298.2 126.0C297.5 124.2 295.9 122.5 294.6 121.4C293.3 120.3 291.8 119.8 290.4 119.4C289.0 119.0 287.8 118.7 286.0 118.9Z"/>
<path d="M288.6 157.4C292 156.4 296.6 156.6 299.6 158.4C300.8 162 300.8 168 299.4 171.4L296 166.4C294 165.4 291.4 165.8 289.6 167L286.2 171.6C286 166 287 161 288.6 157.4Z" fill="#8e99a8" stroke="none"/>
<path d="M286 171.6C287 175 290 176.6 293.4 176.4C296.4 176.4 298.6 174.6 299.4 171.4" fill="none" stroke-width="0.5" stroke-dasharray="0.9 0.6"/>
<path d="M284 156.4C289 155 297 155.4 301.4 158.6" fill="none" stroke-width="0.5" stroke-dasharray="0.9 0.6"/>
<path d="M280.4 149.4L286 147L291.4 140.6L287.4 153L283.4 156.4L283 152.6Z" fill="#8e99a8" stroke="none" opacity="0.85"/>
<circle cx="289" cy="137.2" r="6" fill="none" stroke-width="0.5" stroke-dasharray="0.9 0.6"/>
<path d="M288.4 134C290.4 133 292 134.6 291.4 137.4L289.6 141L288.6 138.6Z" fill="#8e99a8" stroke="#7c8795" stroke-width="0.4"/>
<path d="M274.6 133.4L277.6 134.2" fill="none" stroke="#6f7a89" stroke-width="0.9"/>
<path d="M271.8 142.6H274" fill="none" stroke-width="0.65"/>
<path d="M274.6 186C275.4 195 275.2 205 274.6 213" fill="none" stroke-width="0.65"/>
<path d="M271.6 184C273 190 273.6 196 273.4 204" fill="none" stroke-width="0.4"/>
<path d="M272 186C276 194 284 200 294.6 199" fill="none" stroke-width="0.65"/>
<path d="M282.4 197.6C288 199.4 292 199 294.6 198" fill="none" stroke-width="0.5" stroke-dasharray="0.9 0.6"/>
<path d="M272.4 224C276 214 284 208 291 209.4C295 210.6 297.4 214 298.6 219" fill="none" stroke-width="0.75"/>
<circle cx="285.7" cy="229.2" r="6.6" fill="none" stroke-width="0.5" stroke-dasharray="0.9 0.6"/>
<path d="M272.6 276.6L284 275.6L287.6 278.6" fill="none" stroke-width="0.65"/>
<path d="M284 275.6L285.4 268" fill="none" stroke-width="0.4"/>
<path d="M283.6 326.4C287 324.6 291.4 324.6 294.6 326" fill="none" stroke-width="0.5" stroke-dasharray="0.9 0.6"/>
<path d="M283.4 332.6C287 333.4 291 331.4 293.4 327.6L295.6 332" fill="none" stroke-width="0.65"/>
<path d="M285 336C288 338.4 293 337.4 296 334" fill="none" stroke-width="0.5" stroke-dasharray="0.9 0.6"/>
</g>
<g transform="translate(616.8 0) scale(-1 1)" fill="#c5cbd2" stroke="#7c8795" stroke-width="1.0" stroke-linejoin="round">
<path d="M286.0 118.9C284.2 119.1 281.4 119.5 279.6 120.4C277.8 121.3 276.0 122.8 275.0 124.4C274.0 126.0 273.8 128.4 273.4 130.0C273.0 131.6 273.2 132.6 272.6 134.0C272.0 135.4 270.2 137.3 270.0 138.4C269.8 139.5 271.4 139.7 271.6 140.4C271.8 141.1 271.3 141.8 271.4 142.6C271.5 143.4 271.7 144.0 272.0 145.0C272.3 146.0 272.3 147.6 273.0 148.4C273.7 149.2 274.8 149.6 276.0 149.8C277.2 150.0 279.2 148.9 280.4 149.4C281.6 149.9 282.6 151.4 283.0 152.6C283.4 153.8 283.5 154.9 282.6 156.6C281.7 158.3 279.0 160.8 277.4 163.0C275.8 165.2 274.1 167.5 273.0 170.0C271.9 172.5 271.4 175.0 271.0 178.0C270.6 181.0 270.8 184.3 270.6 188.0C270.5 191.7 270.2 196.0 270.1 200.0C270.1 204.0 270.3 207.7 270.3 212.0C270.3 216.3 270.0 221.0 270.0 226.0C270.0 231.0 270.0 236.3 270.1 242.0C270.2 247.7 270.6 255.3 270.9 260.0C271.2 264.7 271.7 267.3 272.0 270.0C272.3 272.7 272.0 274.0 272.6 276.0C273.2 278.0 274.4 280.0 275.4 282.0C276.4 284.0 277.7 285.5 278.4 288.0C279.1 290.5 279.4 293.8 279.8 297.0C280.2 300.2 280.5 303.5 280.9 307.0C281.3 310.5 282.0 314.8 282.4 318.0C282.8 321.2 283.2 324.0 283.3 326.0C283.4 328.0 283.3 328.2 283.0 330.0C282.7 331.8 282.1 334.5 281.6 337.0C281.1 339.5 280.9 342.5 280.0 345.0C279.1 347.5 276.7 350.5 276.2 352.0C275.7 353.5 276.6 353.7 277.2 354.0C277.8 354.3 278.6 354.5 279.6 353.8C280.6 353.1 282.1 351.3 283.4 350.0C284.7 348.7 286.2 347.5 287.6 346.2C289.0 344.9 290.6 343.3 292.0 342.0C293.4 340.7 294.9 339.9 296.0 338.6C297.1 337.3 298.5 335.8 298.9 334.4C299.3 333.0 298.8 331.7 298.2 330.4C297.6 329.1 296.1 328.3 295.3 326.6C294.5 324.9 293.8 322.2 293.4 320.0C293.0 317.8 292.6 315.6 292.8 313.4C293.0 311.2 293.9 309.0 294.4 307.0C294.9 305.0 295.5 303.3 295.6 301.3C295.7 299.3 295.6 297.2 295.0 295.0C294.4 292.8 293.1 290.2 292.0 288.0C290.9 285.8 289.2 284.0 288.4 282.0C287.6 280.0 287.4 278.3 287.4 276.0C287.4 273.7 287.7 270.7 288.2 268.0C288.7 265.3 289.7 263.0 290.6 260.0C291.5 257.0 292.5 253.0 293.4 250.0C294.3 247.0 295.1 244.5 296.0 241.8C296.9 239.1 298.4 236.3 299.0 234.0C299.6 231.7 299.7 230.2 299.7 228.0C299.7 225.8 299.6 223.7 299.0 221.0C298.4 218.3 297.2 214.8 296.4 212.0C295.6 209.2 294.5 207.0 294.4 204.0C294.3 201.0 294.8 196.8 295.6 194.0C296.4 191.2 297.8 189.3 299.0 187.0C300.2 184.7 301.8 182.5 302.6 180.0C303.4 177.5 303.5 174.3 303.6 172.0C303.7 169.7 303.5 167.8 303.2 166.0C302.9 164.2 302.4 162.8 301.6 161.4C300.8 160.0 299.6 158.9 298.6 157.6C297.6 156.3 296.5 155.2 295.8 153.6C295.1 152.0 294.9 149.9 294.6 148.0C294.3 146.1 293.7 144.1 294.0 142.4C294.3 140.7 295.6 139.7 296.4 138.0C297.2 136.3 298.4 134.0 298.7 132.0C299.0 130.0 298.9 127.8 298.2 126.0C297.5 124.2 295.9 122.5 294.6 121.4C293.3 120.3 291.8 119.8 290.4 119.4C289.0 119.0 287.8 118.7 286.0 118.9Z"/>
<path d="M288.6 157.4C292 156.4 296.6 156.6 299.6 158.4C300.8 162 300.8 168 299.4 171.4L296 166.4C294 165.4 291.4 165.8 289.6 167L286.2 171.6C286 166 287 161 288.6 157.4Z" fill="#8e99a8" stroke="none"/>
<path d="M286 171.6C287 175 290 176.6 293.4 176.4C296.4 176.4 298.6 174.6 299.4 171.4" fill="none" stroke-width="0.5" stroke-dasharray="0.9 0.6"/>
<path d="M284 156.4C289 155 297 155.4 301.4 158.6" fill="none" stroke-width="0.5" stroke-dasharray="0.9 0.6"/>
<path d="M280.4 149.4L286 147L291.4 140.6L287.4 153L283.4 156.4L283 152.6Z" fill="#8e99a8" stroke="none" opacity="0.85"/>
<circle cx="289" cy="137.2" r="6" fill="none" stroke-width="0.5" stroke-dasharray="0.9 0.6"/>
<path d="M288.4 134C290.4 133 292 134.6 291.4 137.4L289.6 141L288.6 138.6Z" fill="#8e99a8" stroke="#7c8795" stroke-width="0.4"/>
<path d="M274.6 133.4L277.6 134.2" fill="none" stroke="#6f7a89" stroke-width="0.9"/>
<path d="M271.8 142.6H274" fill="none" stroke-width="0.65"/>
<path d="M274.6 186C275.4 195 275.2 205 274.6 213" fill="none" stroke-width="0.65"/>
<path d="M271.6 184C273 190 273.6 196 273.4 204" fill="none" stroke-width="0.4"/>
<path d="M272 186C276 194 284 200 294.6 199" fill="none" stroke-width="0.65"/>
<path d="M282.4 197.6C288 199.4 292 199 294.6 198" fill="none" stroke-width="0.5" stroke-dasharray="0.9 0.6"/>
<path d="M272.4 224C276 214 284 208 291 209.4C295 210.6 297.4 214 298.6 219" fill="none" stroke-width="0.75"/>
<circle cx="285.7" cy="229.2" r="6.6" fill="none" stroke-width="0.5" stroke-dasharray="0.9 0.6"/>
<path d="M272.6 276.6L284 275.6L287.6 278.6" fill="none" stroke-width="0.65"/>
<path d="M284 275.6L285.4 268" fill="none" stroke-width="0.4"/>
<path d="M283.6 326.4C287 324.6 291.4 324.6 294.6 326" fill="none" stroke-width="0.5" stroke-dasharray="0.9 0.6"/>
<path d="M283.4 332.6C287 333.4 291 331.4 293.4 327.6L295.6 332" fill="none" stroke-width="0.65"/>
<path d="M285 336C288 338.4 293 337.4 296 334" fill="none" stroke-width="0.5" stroke-dasharray="0.9 0.6"/>
</g>
<g transform="translate(190.3 0)" fill="#c5cbd2" stroke="#7c8795" stroke-width="1.0" stroke-linejoin="round">
<path d="M206.2 143.0C203.7 144.3 206.6 149.1 205.4 151.0C204.2 152.9 201.3 153.6 199.0 154.6C196.7 155.6 194.0 155.9 191.8 156.8C189.6 157.7 187.4 158.5 186.0 160.0C184.6 161.5 183.9 162.7 183.4 166.0C182.9 169.3 183.1 175.3 182.8 180.0C182.5 184.7 182.0 190.2 181.4 194.0C180.8 197.8 180.0 199.3 179.0 203.0C178.0 206.7 176.5 211.7 175.2 216.0C173.9 220.3 172.8 225.8 171.3 228.7C169.9 231.6 167.9 231.4 166.5 233.5C165.1 235.6 163.0 239.5 162.6 241.0C162.2 242.5 163.3 242.8 164.0 242.6C164.7 242.4 166.4 238.8 166.6 240.0C166.8 241.2 165.3 247.8 165.4 249.6C165.5 251.4 166.2 250.9 167.4 251.0C168.6 251.1 171.1 251.9 172.6 250.2C174.1 248.5 175.8 243.7 176.6 241.0C177.4 238.3 177.3 235.8 177.6 234.0C177.9 232.2 177.4 232.8 178.4 230.3C179.4 227.8 181.9 222.5 183.6 219.0C185.3 215.5 187.1 212.9 188.4 209.5C189.7 206.1 190.3 202.0 191.2 198.4C192.1 194.8 193.0 191.0 193.6 188.0C194.2 185.0 194.5 179.3 194.9 180.5C195.3 181.7 196.2 190.4 196.2 195.4C196.2 200.4 195.6 207.2 195.0 210.6C194.4 214.0 193.2 212.7 192.4 216.0C191.6 219.3 190.6 225.4 190.4 230.3C190.2 235.2 190.6 241.1 191.0 245.4C191.4 249.7 192.0 252.6 192.8 256.0C193.6 259.4 194.8 263.1 195.6 266.0C196.4 268.9 197.7 270.9 197.8 273.2C197.9 275.5 196.5 277.7 196.0 280.0C195.5 282.3 195.4 284.1 195.0 287.0C194.6 289.9 193.7 293.9 193.7 297.4C193.7 300.9 194.4 304.6 195.0 308.0C195.6 311.4 196.6 314.8 197.4 318.0C198.2 321.2 199.5 324.5 199.6 327.5C199.7 330.5 198.8 333.1 198.0 336.0C197.2 338.9 195.5 342.5 195.0 345.0C194.5 347.5 194.5 349.4 194.8 351.0C195.1 352.6 195.6 353.9 197.0 354.6C198.4 355.3 201.2 355.2 203.0 355.0C204.8 354.8 206.6 355.1 207.6 353.6C208.6 352.1 208.8 348.9 209.0 346.0C209.2 343.1 208.8 339.1 208.7 336.0C208.6 332.9 208.5 330.7 208.4 327.5C208.3 324.3 208.1 321.6 208.2 317.0C208.3 312.4 209.0 305.0 209.2 300.0C209.4 295.0 209.3 291.5 209.4 287.0C209.5 282.5 209.8 278.4 210.0 273.2C210.2 268.0 210.5 260.7 210.8 256.0C211.1 251.3 211.7 247.9 212.0 245.0C212.3 242.1 212.7 239.7 212.9 238.6C213.2 237.5 213.2 237.5 213.5 238.6C213.7 239.7 214.0 242.1 214.4 245.0C214.7 247.9 215.3 251.3 215.6 256.0C215.9 260.7 216.2 268.0 216.4 273.2C216.6 278.4 216.9 282.5 217.0 287.0C217.1 291.5 217.0 295.0 217.2 300.0C217.4 305.0 218.1 312.4 218.2 317.0C218.3 321.6 218.1 324.3 218.0 327.5C217.9 330.7 217.8 332.9 217.7 336.0C217.6 339.1 217.2 343.1 217.4 346.0C217.6 348.9 217.8 352.1 218.8 353.6C219.8 355.1 221.6 354.8 223.4 355.0C225.2 355.2 228.0 355.3 229.4 354.6C230.8 353.9 231.3 352.6 231.6 351.0C231.9 349.4 231.9 347.5 231.4 345.0C230.9 342.5 229.2 338.9 228.4 336.0C227.6 333.1 226.7 330.5 226.8 327.5C226.9 324.5 228.2 321.2 229.0 318.0C229.8 314.8 230.8 311.4 231.4 308.0C232.0 304.6 232.7 300.9 232.7 297.4C232.7 293.9 231.8 289.9 231.4 287.0C231.0 284.1 230.9 282.3 230.4 280.0C229.9 277.7 228.5 275.5 228.6 273.2C228.7 270.9 230.0 268.9 230.8 266.0C231.6 263.1 232.8 259.4 233.6 256.0C234.4 252.6 235.0 249.7 235.4 245.4C235.8 241.1 236.2 235.2 236.0 230.3C235.8 225.4 234.8 219.3 234.0 216.0C233.2 212.7 232.0 214.0 231.4 210.6C230.8 207.2 230.2 200.4 230.2 195.4C230.2 190.4 231.1 181.7 231.5 180.5C231.9 179.3 232.2 185.0 232.8 188.0C233.4 191.0 234.3 194.8 235.2 198.4C236.1 202.0 236.7 206.1 238.0 209.5C239.3 212.9 241.1 215.5 242.8 219.0C244.5 222.5 247.0 227.8 248.0 230.3C249.0 232.8 248.5 232.2 248.8 234.0C249.1 235.8 249.0 238.3 249.8 241.0C250.6 243.7 252.3 248.5 253.8 250.2C255.3 251.9 257.8 251.1 259.0 251.0C260.2 250.9 260.9 251.4 261.0 249.6C261.1 247.8 259.6 241.2 259.8 240.0C260.0 238.8 261.7 242.4 262.4 242.6C263.1 242.8 264.2 242.5 263.8 241.0C263.4 239.5 261.3 235.6 259.9 233.5C258.4 231.4 256.5 231.6 255.1 228.7C253.6 225.8 252.5 220.3 251.2 216.0C249.9 211.7 248.4 206.7 247.4 203.0C246.4 199.3 245.6 197.8 245.0 194.0C244.4 190.2 243.9 184.7 243.6 180.0C243.3 175.3 243.5 169.3 243.0 166.0C242.5 162.7 241.8 161.5 240.4 160.0C239.0 158.5 236.8 157.7 234.6 156.8C232.4 155.9 229.7 155.6 227.4 154.6C225.1 153.6 222.2 152.9 221.0 151.0C219.8 149.1 222.7 144.3 220.2 143.0C217.7 141.7 208.7 141.7 206.2 143.0Z"/>
<path d="M206.6 145.0C206.3 144.5 205.6 143.0 205.0 142.2C204.4 141.4 203.4 141.0 202.8 140.2C202.2 139.4 201.6 138.6 201.3 137.5C201.0 136.4 201.0 134.3 201.2 133.6C201.4 132.8 202.3 133.6 202.6 133.0C202.8 132.4 202.5 131.4 202.7 130.0C202.9 128.6 203.2 126.2 204.0 124.6C204.8 123.0 206.3 121.3 207.8 120.4C209.3 119.5 211.4 119.2 213.2 119.2C215.0 119.2 217.1 119.5 218.6 120.4C220.1 121.3 221.5 123.0 222.4 124.6C223.2 126.2 223.5 128.6 223.7 130.0C223.9 131.4 223.5 132.4 223.8 133.0C224.0 133.6 225.0 132.8 225.2 133.6C225.4 134.3 225.4 136.4 225.1 137.5C224.8 138.6 224.2 139.4 223.6 140.2C223.0 141.0 222.0 141.4 221.4 142.2C220.8 143.0 220.1 144.5 219.8 145.0"/>
<path d="M167.6 243L166.8 250.4M170.2 243.6L170 250.6M172.8 243L173 249.4M258.8 243L259.6 250.4M256.2 243.6L256.4 250.6M253.6 243L253.4 249.4" fill="none" stroke="#dde0e4" stroke-width="0.55"/>
<path d="M166.4 240.4C169 238.6 172 238.6 175 240M260 240.4C257.4 238.6 254.4 238.6 251.4 240" fill="none" stroke-width="0.4"/>
<path d="M202.6 131.6L200.7 133.4L201 138L203 141.6ZM223.8 131.6L225.7 133.4L225.4 138L223.4 141.6Z" fill="#cdd2d8" stroke="#7c8795" stroke-width="0.4"/>
<path d="M208.6 139.4C211 138 215.4 138 217.8 139.4" fill="none" stroke="#6f7a89" stroke-width="0.9"/>
<path d="M206.4 144L208 150M220 144L218.4 150" fill="none" stroke-width="0.65"/>
<path d="M191.8 157.4C200 158.6 226.4 158.6 234.6 157.4" fill="none" stroke-width="0.75"/>
<circle cx="213.4" cy="156.2" r="6.2" fill="none" stroke-width="0.5" stroke-dasharray="0.9 0.6"/>
<circle cx="202.9" cy="171.3" r="6.8" fill="none" stroke-width="0.5" stroke-dasharray="0.9 0.6"/>
<path d="M194.6 158V186M231.8 158V186" fill="none" stroke-width="0.5" stroke-dasharray="0.9 0.6"/>
<path d="M196 180C200 186 207 186 212.4 180.6L213.2 178L214 180.6C219.4 186 226.4 186 230.4 180" fill="none" stroke-width="0.75"/>
<path d="M194.4 178L196.6 184L195.6 190ZM232 178L229.8 184L230.8 190Z" fill="#8e99a8" stroke="none"/>
<path d="M213.2 185V202" fill="none" stroke-width="0.75"/>
<path d="M183 194C186 193 190 195 191.6 199M243.4 194C240.4 193 236.4 195 234.8 199M180.6 202C183.6 204.6 187 205 189.6 204M245.8 202C242.8 204.6 239.4 205 236.8 204" fill="none" stroke-width="0.65"/>
<path d="M195.4 209C200 210.4 204 210 207 209.4M231 209C226.4 210.4 222.4 210 219.4 209.4" fill="none" stroke-width="0.65"/>
<path d="M207.4 210L212.8 214.8V222H213.6V214.8L219 210L213.2 213.4Z" fill="#8e99a8" stroke="#8e99a8" stroke-width="0.5"/>
<path d="M213.2 222V240" fill="none" stroke-width="0.7"/>
<path d="M191.6 232C196 239 207 240.4 213.2 237C219.4 240.4 230.4 239 234.8 232" fill="none" stroke-width="0.8"/>
<circle cx="201.3" cy="235" r="6.4" fill="none" stroke-width="0.5" stroke-dasharray="0.9 0.6"/><circle cx="226.3" cy="235" r="6.4" fill="none" stroke-width="0.5" stroke-dasharray="0.9 0.6"/>
<path d="M197.6 275C201 277 206 277 209.6 275M216.8 275C220.4 277 225.4 277 228.8 275" fill="none" stroke-width="0.65"/>
<path d="M209.4 300L208.6 318L207.8 300ZM217 300L217.8 318L218.6 300Z" fill="#8e99a8" stroke="none"/>
<path d="M200 327C202.6 329 206 329 208.4 327M218 327C220.4 329 223.8 329 226.4 327" fill="none" stroke-width="0.65"/>
<ellipse cx="204.4" cy="336" rx="4" ry="3.6" fill="none" stroke-width="0.4"/><ellipse cx="222" cy="336" rx="4" ry="3.6" fill="none" stroke-width="0.4"/>
<circle cx="217.6" cy="332" r="2.6" fill="none" stroke="#f2f3f4" stroke-width="0.5"/><circle cx="226.4" cy="332" r="2.6" fill="none" stroke="#f2f3f4" stroke-width="0.5"/>
<path d="M171.6 228.8L178 231.2M254.8 228.8L248.4 231.2" fill="none" stroke-width="0.75"/>
</g>
<path d="M308.4 110V363" fill="none" stroke="#c3c7cd" stroke-width="0.5" stroke-dasharray="0.8 0.8"/>
<circle cx="285.7" cy="228.9" r="7.7" fill="none" stroke="#ea1219" stroke-width="1.35"/>
<circle cx="414.1" cy="171.3" r="7.7" fill="none" stroke="#ea1219" stroke-width="1.35"/>
<circle cx="403.3" cy="213.7" r="7.7" fill="none" stroke="#ea1219" stroke-width="1.35"/>
<circle cx="394.9" cy="332.2" r="7.7" fill="none" stroke="#ea1219" stroke-width="1.35"/>
</svg>
<div class="a" style="left:471.8px;top:77.2px;width:215.8px;height:12.4px;border:0.6px solid #dde1e6;border-radius:1.2px;background:#fff"></div>
<svg class="a" style="left:475.6px;top:80.6px" width="5.4" height="5.4" viewBox="0 0 6 6"><circle cx="2.4" cy="2.4" r="1.7" fill="none" stroke="#8a8f98" stroke-width="0.7"/><path d="M3.7 3.7L5.6 5.6" stroke="#8a8f98" stroke-width="0.8"/></svg>
<div class="t" style="left:483.7px;top:82px;font-size:4.6px;color:#9aa0a8;transform:translateY(0.21px) rotate(0.03deg);font-style:italic;">Lokalisationen durchsuchen</div>
<div class="t" style="left:471.5px;top:96px;font-size:4.8px;color:#262626;transform:translateY(0.50px) rotate(0.03deg);-webkit-text-stroke:0.1px #262626;">Empfehlungen für Wundtyp Dekubitus</div>
<div class="a" style="left:634px;top:92.2px;width:38.4px;height:11.2px;background:#bbdbf9;border:0.7px solid #3b8ad8;border-radius:1.2px 0 0 1.2px"></div>
<div class="t" style="left:637.6px;top:96px;font-size:4.85px;color:#1c3a60;transform:translateY(0.49px) rotate(0.03deg);">Empfehlungen</div>
<div class="a" style="left:672.2px;top:92.2px;width:15.2px;height:11.2px;background:#fff;border:0.7px solid #7db8ee;border-left:none;border-radius:0 1.2px 1.2px 0"></div>
<div class="t" style="left:675.5px;top:96px;font-size:4.9px;color:#2f7fd8;transform:translateY(0.49px) rotate(0.03deg);">Alle</div>
<div class="a" style="left:471.6px;top:105px;width:215.8px;height:266.2px;border:0.6px solid #e4e7ea;background:#fff"></div>
<svg class="a" style="left:485.8px;top:108.10px" width="7.8" height="7.8" viewBox="0 0 7.8 7.8"><rect x="0.85" y="0.85" width="6.0" height="6.0" rx="0.55" fill="#fff" stroke="#5c5c5c" stroke-width="0.7"/></svg>
<div class="t" style="left:495.5px;top:110px;font-size:4.7px;color:#4c4c4c;transform:translateY(0.71px) rotate(0.03deg);">Außenknöchel li.</div>
<svg class="a" style="left:485.8px;top:120.00px" width="7.8" height="7.8" viewBox="0 0 7.8 7.8"><rect x="0.85" y="0.85" width="6.0" height="6.0" rx="0.55" fill="#fff" stroke="#5c5c5c" stroke-width="0.7"/></svg>
<div class="t" style="left:495.5px;top:122px;font-size:4.7px;color:#4c4c4c;transform:translateY(0.61px) rotate(0.03deg);">Außenknöchel re.</div>
<svg class="a" style="left:485.8px;top:131.90px" width="7.8" height="7.8" viewBox="0 0 7.8 7.8"><rect x="0.85" y="0.85" width="6.0" height="6.0" rx="0.55" fill="#fff" stroke="#5c5c5c" stroke-width="0.7"/></svg>
<div class="t" style="left:495.5px;top:134px;font-size:4.7px;color:#4c4c4c;transform:translateY(0.51px) rotate(0.03deg);">Beckenkamm li.</div>
<svg class="a" style="left:485.8px;top:143.80px" width="7.8" height="7.8" viewBox="0 0 7.8 7.8"><rect x="0.85" y="0.85" width="6.0" height="6.0" rx="0.55" fill="#fff" stroke="#5c5c5c" stroke-width="0.7"/></svg>
<div class="t" style="left:495.5px;top:146px;font-size:4.7px;color:#4c4c4c;transform:translateY(0.41px) rotate(0.03deg);">Beckenkamm re.</div>
<svg class="a" style="left:485.8px;top:155.70px" width="7.8" height="7.8" viewBox="0 0 7.8 7.8"><rect x="0.85" y="0.85" width="6.0" height="6.0" rx="0.55" fill="#fff" stroke="#5c5c5c" stroke-width="0.7"/></svg>
<div class="t" style="left:495.5px;top:158px;font-size:4.7px;color:#4c4c4c;transform:translateY(0.31px) rotate(0.03deg);">Dornfortsätze</div>
<svg class="a" style="left:485.8px;top:167.60px" width="7.8" height="7.8" viewBox="0 0 7.8 7.8"><rect x="0.85" y="0.85" width="6.0" height="6.0" rx="0.55" fill="#fff" stroke="#5c5c5c" stroke-width="0.7"/></svg>
<div class="t" style="left:495.5px;top:170px;font-size:4.7px;color:#4c4c4c;transform:translateY(0.21px) rotate(0.03deg);">Ellenbogen li.</div>
<svg class="a" style="left:485.8px;top:179.50px" width="7.8" height="7.8" viewBox="0 0 7.8 7.8"><rect x="0.85" y="0.85" width="6.0" height="6.0" rx="0.55" fill="#fff" stroke="#5c5c5c" stroke-width="0.7"/></svg>
<div class="t" style="left:495.5px;top:182px;font-size:4.7px;color:#4c4c4c;transform:translateY(0.11px) rotate(0.03deg);">Ellenbogen re.</div>
<svg class="a" style="left:485.8px;top:191.40px" width="7.8" height="7.8" viewBox="0 0 7.8 7.8"><rect x="0.85" y="0.85" width="6.0" height="6.0" rx="0.55" fill="#fff" stroke="#5c5c5c" stroke-width="0.7"/></svg>
<div class="t" style="left:495.5px;top:194px;font-size:4.7px;color:#4c4c4c;transform:translateY(0.01px) rotate(0.03deg);">Ferse li.</div>
<svg class="a" style="left:485.8px;top:203.30px" width="7.8" height="7.8" viewBox="0 0 7.8 7.8"><rect x="0.85" y="0.85" width="6.0" height="6.0" rx="0.55" fill="#fff" stroke="#5c5c5c" stroke-width="0.7"/></svg>
<div class="t" style="left:495.5px;top:205px;font-size:4.7px;color:#4c4c4c;transform:translateY(0.91px) rotate(0.03deg);">Ferse re.</div>
<svg class="a" style="left:485.8px;top:215.20px" width="7.8" height="7.8" viewBox="0 0 7.8 7.8"><rect x="0.85" y="0.85" width="6.0" height="6.0" rx="0.55" fill="#fff" stroke="#5c5c5c" stroke-width="0.7"/></svg>
<div class="t" style="left:495.5px;top:217px;font-size:4.7px;color:#4c4c4c;transform:translateY(0.81px) rotate(0.03deg);">Innenknöchel li.</div>
<svg class="a" style="left:485.8px;top:227.10px" width="7.8" height="7.8" viewBox="0 0 7.8 7.8"><rect x="0.85" y="0.85" width="6.0" height="6.0" rx="0.55" fill="#fff" stroke="#5c5c5c" stroke-width="0.7"/></svg>
<div class="t" style="left:495.5px;top:229px;font-size:4.7px;color:#4c4c4c;transform:translateY(0.71px) rotate(0.03deg);">Innenknöchel re.</div>
<svg class="a" style="left:485.8px;top:239.00px" width="7.8" height="7.8" viewBox="0 0 7.8 7.8"><rect x="0.85" y="0.85" width="6.0" height="6.0" rx="0.55" fill="#fff" stroke="#5c5c5c" stroke-width="0.7"/></svg>
<div class="t" style="left:495.5px;top:241px;font-size:4.7px;color:#4c4c4c;transform:translateY(0.61px) rotate(0.03deg);">Kreuzbein</div>
<svg class="a" style="left:485.8px;top:250.90px" width="7.8" height="7.8" viewBox="0 0 7.8 7.8"><rect x="0.85" y="0.85" width="6.0" height="6.0" rx="0.55" fill="#fff" stroke="#5c5c5c" stroke-width="0.7"/></svg>
<div class="t" style="left:495.5px;top:253px;font-size:4.7px;color:#4c4c4c;transform:translateY(0.51px) rotate(0.03deg);">Ohrmuschel li.</div>
<svg class="a" style="left:485.8px;top:262.80px" width="7.8" height="7.8" viewBox="0 0 7.8 7.8"><rect x="0.85" y="0.85" width="6.0" height="6.0" rx="0.55" fill="#fff" stroke="#5c5c5c" stroke-width="0.7"/></svg>
<div class="t" style="left:495.5px;top:265px;font-size:4.7px;color:#4c4c4c;transform:translateY(0.41px) rotate(0.03deg);">Ohrmuschel re.</div>
<svg class="a" style="left:485.8px;top:274.70px" width="7.8" height="7.8" viewBox="0 0 7.8 7.8"><rect x="0.85" y="0.85" width="6.0" height="6.0" rx="0.55" fill="#fff" stroke="#5c5c5c" stroke-width="0.7"/></svg>
<div class="t" style="left:495.5px;top:277px;font-size:4.7px;color:#4c4c4c;transform:translateY(0.31px) rotate(0.03deg);">Schulterblatt li.</div>
<svg class="a" style="left:485.8px;top:286.60px" width="7.8" height="7.8" viewBox="0 0 7.8 7.8"><rect x="0.85" y="0.85" width="6.0" height="6.0" rx="0.55" fill="#fff" stroke="#5c5c5c" stroke-width="0.7"/></svg>
<div class="t" style="left:495.5px;top:289px;font-size:4.7px;color:#4c4c4c;transform:translateY(0.21px) rotate(0.03deg);">Schulterblatt re.</div>
<svg class="a" style="left:485.8px;top:298.50px" width="7.8" height="7.8" viewBox="0 0 7.8 7.8"><rect x="0.85" y="0.85" width="6.0" height="6.0" rx="0.55" fill="#fff" stroke="#5c5c5c" stroke-width="0.7"/></svg>
<div class="t" style="left:495.5px;top:301px;font-size:4.7px;color:#4c4c4c;transform:translateY(0.11px) rotate(0.03deg);">Sitzbein li.</div>
<svg class="a" style="left:485.8px;top:310.40px" width="7.8" height="7.8" viewBox="0 0 7.8 7.8"><rect x="0.85" y="0.85" width="6.0" height="6.0" rx="0.55" fill="#fff" stroke="#5c5c5c" stroke-width="0.7"/></svg>
<div class="t" style="left:495.5px;top:313px;font-size:4.7px;color:#4c4c4c;transform:translateY(0.01px) rotate(0.03deg);">Sitzbein re</div>
<svg class="a" style="left:485.8px;top:322.30px" width="7.8" height="7.8" viewBox="0 0 7.8 7.8"><rect x="0.85" y="0.85" width="6.0" height="6.0" rx="0.55" fill="#fff" stroke="#5c5c5c" stroke-width="0.7"/></svg>
<div class="t" style="left:495.5px;top:324px;font-size:4.7px;color:#4c4c4c;transform:translateY(0.91px) rotate(0.03deg);">Trochanter li.</div>
<svg class="a" style="left:485.8px;top:334.20px" width="7.8" height="7.8" viewBox="0 0 7.8 7.8"><rect x="0.85" y="0.85" width="6.0" height="6.0" rx="0.55" fill="#fff" stroke="#5c5c5c" stroke-width="0.7"/></svg>
<div class="t" style="left:495.5px;top:336px;font-size:4.7px;color:#4c4c4c;transform:translateY(0.81px) rotate(0.03deg);">Trochanter re.</div>
<div class="a" style="left:140.4px;top:373.2px;width:549px;height:0.6px;background:#d9dce2"></div>
<div class="a" style="left:143.6px;top:376.4px;width:22.6px;height:12.2px;border:0.9px solid #86bbec;border-radius:1.4px;background:#fff"></div>
<div class="t" style="left:147.8px;top:381px;font-size:4.8px;color:#2f7fd8;transform:translateY(0.20px) rotate(0.03deg);">Zurück</div>
<div class="a" style="left:170.4px;top:376.6px;width:486.8px;height:11.8px;border:0.6px solid #dcdfe4;border-radius:1.2px 0 0 1.2px;background:#fff"></div>
<div class="t" style="left:173px;top:381px;font-size:4.6px;color:#9aa0a8;transform:translateY(0.21px) rotate(0.03deg);font-style:italic;">Keine Lokalisation ausgewählt. Bitte wählen Sie eine Lokalisation aus.</div>
<svg class="a" style="left:649.4px;top:380.8px" width="3" height="3" viewBox="0 0 4 4"><path d="M0.3 0.3L3.7 3.7M3.7 0.3L0.3 3.7" stroke="#a9aeb6" stroke-width="0.7"/></svg>
<div class="a" style="left:657px;top:376.6px;width:28.6px;height:11.4px;background:#1671d3;border-radius:0 1.2px 1.2px 0"></div>
<svg class="a" style="left:661.6px;top:380.4px" width="4.6" height="3.8" viewBox="0 0 5 4"><path d="M0.5 2.1L1.9 3.4L4.5 0.5" fill="none" stroke="#fff" stroke-width="0.8"/></svg>
<div class="t" style="left:670px;top:380px;font-size:4.9px;color:#fff;transform:translateY(0.99px) rotate(0.03deg);">Fertig</div>
<div class="a" style="left:671.6px;top:262.2px;width:20.6px;height:75.6px;background:#fff;border:1.1px solid #5f88d3;border-right:none;border-radius:10px 0 0 10px"></div>
<div class="a" style="left:689.2px;top:263.3px;width:6px;height:73.4px;background:#fff"></div>
<svg class="a" style="left:678.4px;top:271px" width="9.4" height="8.6" viewBox="0 0 10 9"><path d="M5 0.3L0.2 4.6H1.5V8.7H4V6H6V8.7H8.5V4.6H9.8Z M7.3 0.9H8.4V2.6L7.3 1.7Z" fill="#222"/></svg>
<svg class="a" style="left:679.6px;top:288px" width="6" height="10" viewBox="0 0 6 10"><path d="M5 0.8L1.2 5L5 9.2" fill="none" stroke="#222" stroke-width="1.6"/></svg>
<svg class="a" style="left:680.6px;top:306.6px" width="6" height="7.6" viewBox="0 0 6 7.6"><path d="M0.2 0.2L5.8 3.8L0.2 7.4Z" fill="#222"/></svg>
<svg class="a" style="left:680.6px;top:321.6px" width="6" height="10" viewBox="0 0 6 10"><path d="M1 0.8L4.8 5L1 9.2" fill="none" stroke="#222" stroke-width="1.6"/></svg>
</div>
</body></html>
